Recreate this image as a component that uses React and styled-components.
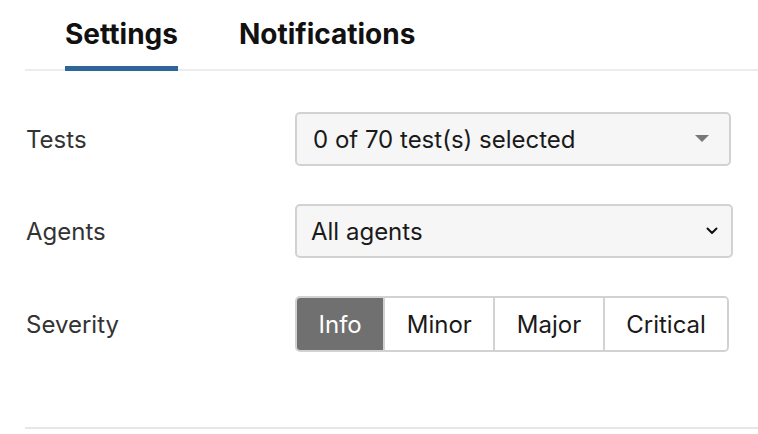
import { useState } from 'react';
import styled, { createGlobalStyle } from 'styled-components';

const GlobalStyle = createGlobalStyle`
  body {
    margin: 0;
    background: #ffffff;
    font-family: Inter, "Noto Sans", sans-serif;
    color: #222;
  }
`;

const severities = ['Info', 'Minor', 'Major', 'Critical'];

export default function App() {
    const [tab, setTab] = useState('settings');
    const [severity, setSeverity] = useState('Info');

    return (
        <>
            <GlobalStyle />
            <Panel>
                <Tabs>
                    <Tab active={tab === 'settings'} onClick={() => setTab('settings')}>Settings</Tab>
                    <Tab active={tab === 'notifications'} onClick={() => setTab('notifications')}>Notifications</Tab>
                </Tabs>
                <Form>
                    <Row>
                        <Label>Tests</Label>
                        <Select>
                            0 of 70 test(s) selected
                            <svg width="14" height="8" viewBox="0 0 14 8">
                                <path d="M0 0 L14 0 L7 7 Z" fill="#777" />
                            </svg>
                        </Select>
                    </Row>
                    <Row>
                        <Label>Agents</Label>
                        <Select wide>
                            All agents
                            <svg width="12" height="8" viewBox="0 0 12 8">
                                <path d="M1.5 1.5 L6 6 L10.5 1.5" fill="none" stroke="#111" strokeWidth="2" strokeLinecap="round" strokeLinejoin="round" />
                            </svg>
                        </Select>
                    </Row>
                    <Row>
                        <Label>Severity</Label>
                        <Segmented>
                            {severities.map(s => (
                                <Segment key={s} active={severity === s} onClick={() => setSeverity(s)}>
                                    {s}
                                </Segment>
                            ))}
                        </Segmented>
                    </Row>
                </Form>
                <Divider />
            </Panel>
        </>
    );
}

const Panel = styled.div`
  padding-left: 25px;
  width: 733px;
`;

const Tabs = styled.div`
  display: flex;
  gap: 61px;
  padding-left: 40px;
  height: 69px;
  border-bottom: 2px solid #ececec;
`;

const Tab = styled.div`
  display: flex;
  align-items: flex-start;
  padding-top: 17px;
  font-size: 28px;
  font-weight: 700;
  color: #111;
  box-sizing: border-box;
  height: 71px;
  border-bottom: 5px solid ${p => p.active ? '#2f6699' : 'transparent'};
  margin-bottom: -2px;
  cursor: pointer;
`;

const Form = styled.div`
  display: flex;
  flex-direction: column;
  gap: 38px;
  padding-top: 41px;
`;

const Row = styled.div`
  display: grid;
  grid-template-columns: 270px 1fr;
  align-items: center;
  justify-items: start;
`;

const Label = styled.div`
  padding-left: 1px;
  font-size: 24px;
  color: #333;
`;

const Select = styled.div`
  display: flex;
  align-items: center;
  justify-content: space-between;
  box-sizing: border-box;
  height: 54px;
  width: ${p => p.wide ? '438px' : '436px'};
  padding: 0 ${p => p.wide ? '13px' : '20px'} 0 ${p => p.wide ? '14px' : '16px'};
  background: #f6f6f6;
  border: 2px solid #d2d2d2;
  border-radius: 5px;
  font-size: 24px;
  color: #1a1a1a;
`;

const Segmented = styled.div`
  display: flex;
  box-sizing: border-box;
  height: 56px;
  border: 2px solid #d2d2d2;
  border-radius: 5px;
  overflow: hidden;
`;

const Segment = styled.div`
  display: flex;
  align-items: center;
  justify-content: center;
  padding: 0 21.5px;
  font-size: 24px;
  color: ${p => p.active ? '#ffffff' : '#1a1a1a'};
  background: ${p => p.active ? '#707070' : '#ffffff'};
  & + & {
    border-left: 2px solid #d2d2d2;
  }
  cursor: pointer;
`;

const Divider = styled.div`
  margin-top: 75px;
  height: 2px;
  background: #e6e6e6;
`;
